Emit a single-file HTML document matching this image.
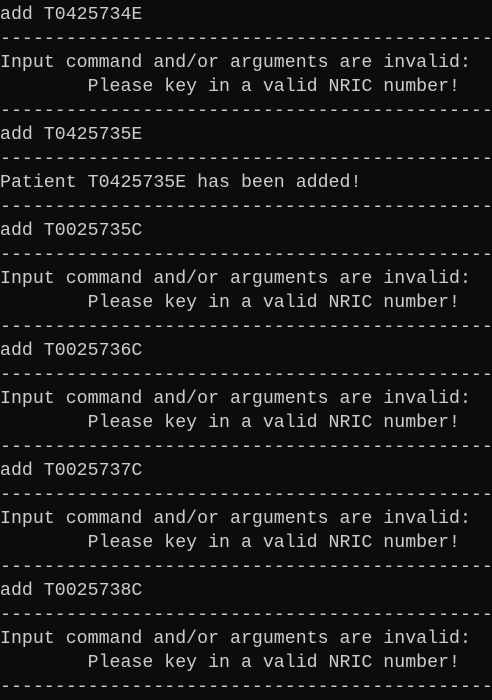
<!DOCTYPE html>
<html><head><style>
html,body{margin:0;padding:0;background:#0c0c0c;width:492px;height:700px;overflow:hidden}
pre{margin:0;position:absolute;top:3px;left:0;font-family:"Liberation Mono",monospace;font-size:18.25px;line-height:24px;color:#cccccc;white-space:pre}
</style></head><body><pre>add T0425734E
---------------------------------------------
Input command and/or arguments are invalid:
        Please key in a valid NRIC number!
---------------------------------------------
add T0425735E
---------------------------------------------
Patient T0425735E has been added!
---------------------------------------------
add T0025735C
---------------------------------------------
Input command and/or arguments are invalid:
        Please key in a valid NRIC number!
---------------------------------------------
add T0025736C
---------------------------------------------
Input command and/or arguments are invalid:
        Please key in a valid NRIC number!
---------------------------------------------
add T0025737C
---------------------------------------------
Input command and/or arguments are invalid:
        Please key in a valid NRIC number!
---------------------------------------------
add T0025738C
---------------------------------------------
Input command and/or arguments are invalid:
        Please key in a valid NRIC number!
---------------------------------------------</pre></body></html>
